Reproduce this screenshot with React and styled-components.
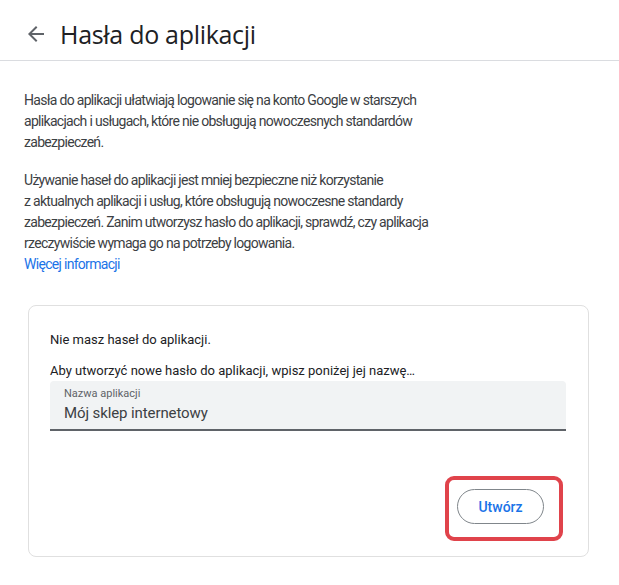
import React from "react";
import styled, { createGlobalStyle } from "styled-components";

const Global = createGlobalStyle`
  html, body { margin: 0; padding: 0; background: #fff; }
  body { font-family: Roboto, "Noto Sans", Arial, sans-serif; color: #202124; }
  * { box-sizing: border-box; }
`;

const Page = styled.div`
  width: 619px;
  min-height: 585px;
  background: #fff;
`;

const Header = styled.header`
  height: 61px;
  display: flex;
  align-items: center;
  padding: 11px 0 0 24px;
  border-bottom: 1px solid #dadce0;
  gap: 12px;
`;

const BackButton = styled.button`
  width: 24px;
  height: 24px;
  padding: 0;
  border: 0;
  background: none;
  display: flex;
  align-items: center;
  justify-content: center;
  color: #5f6368;
  margin-top: -3px;
`;

const Title = styled.h1`
  margin: 0;
  font-family: "Open Sans", Roboto, sans-serif;
  font-weight: 400;
  font-size: 25px;
  letter-spacing: -0.3px;
  color: #202124;
  margin-top: -4px;
`;

const Content = styled.main`
  padding: 29px 24px 0 24px;
`;

const Para = styled.p`
  margin: 0 0 17px 0;
  max-width: 415px;
  font-size: 14px;
  letter-spacing: -0.7px;
  line-height: 21px;
  color: #3c4043;
`;

const Link = styled.a`
  display: block;
  font-size: 14px;
  letter-spacing: -0.7px;
  line-height: 21px;
  color: #1a73e8;
  text-decoration: none;
  margin-top: -17px;
`;

const Card = styled.section`
  margin: 30px 0 0 4px;
  width: 561px;
  border: 1px solid #e0e0e0;
  border-radius: 8px;
  padding: 25px 22px 32px 21px;
`;

const CardText = styled.p`
  margin: 0 0 ${(p) => p.$gap || 0}px 0;
  font-size: 13px;
  line-height: 18px;
  color: #202124;
`;

const Field = styled.div`
  margin-top: 1px;
  background: #f1f3f4;
  border-radius: 4px 4px 0 0;
  border-bottom: 2px solid #5f6368;
  height: 50px;
  padding: 6px 14px 0 14px;
  display: flex;
  flex-direction: column;
`;

const FieldLabel = styled.label`
  font-size: 11px;
  line-height: 14px;
  color: #5f6368;
`;

const FieldValue = styled.div`
  font-size: 15px;
  line-height: 22px;
  letter-spacing: -0.1px;
  color: #3c4043;
  margin-top: 1px;
`;

const Actions = styled.div`
  display: flex;
  justify-content: flex-end;
  padding-right: 22px;
  margin-top: 58px;
`;

const ButtonWrap = styled.div`
  position: relative;
`;

const Highlight = styled.div`
  position: absolute;
  top: -13px;
  left: -12px;
  right: -19px;
  bottom: -17px;
  border: 4px solid #e0434b;
  border-radius: 9px;
  pointer-events: none;
`;

const Button = styled.button`
  width: 87px;
  height: 35px;
  border: 1px solid #80868b;
  border-radius: 18px;
  background: #fff;
  font-family: Roboto, sans-serif;
  font-size: 14px;
  font-weight: 500;
  color: #1a73e8;
  padding: 0;
`;

const ArrowIcon = () => (
  <svg width="24" height="24" viewBox="0 0 24 24" fill="currentColor">
    <path d="M20 11H7.83l5.59-5.59L12 4l-8 8 8 8 1.41-1.41L7.83 13H20v-2z" />
  </svg>
);

export default function App() {
  return (
    <Page>
      <Global />
      <Header>
        <BackButton aria-label="Wstecz">
          <ArrowIcon />
        </BackButton>
        <Title>Hasła do aplikacji</Title>
      </Header>
      <Content>
        <Para>
          Hasła do aplikacji ułatwiają logowanie się na konto Google w starszych
          aplikacjach i usługach, które nie obsługują nowoczesnych standardów
          zabezpieczeń.
        </Para>
        <Para>
          Używanie haseł do aplikacji jest mniej bezpieczne niż korzystanie
          z{"\u00a0"}aktualnych aplikacji i usług, które obsługują nowoczesne
          standardy zabezpieczeń. Zanim utworzysz hasło do aplikacji, sprawdź,
          czy aplikacja rzeczywiście wymaga go na potrzeby logowania.
        </Para>
        <Link href="#">Więcej informacji</Link>
        <Card>
          <CardText $gap={13}>Nie masz haseł do aplikacji.</CardText>
          <CardText>
            Aby utworzyć nowe hasło do aplikacji, wpisz poniżej jej nazwę…
          </CardText>
          <Field>
            <FieldLabel>Nazwa aplikacji</FieldLabel>
            <FieldValue>Mój sklep internetowy</FieldValue>
          </Field>
          <Actions>
            <ButtonWrap>
              <Button>Utwórz</Button>
              <Highlight />
            </ButtonWrap>
          </Actions>
        </Card>
      </Content>
    </Page>
  );
}
